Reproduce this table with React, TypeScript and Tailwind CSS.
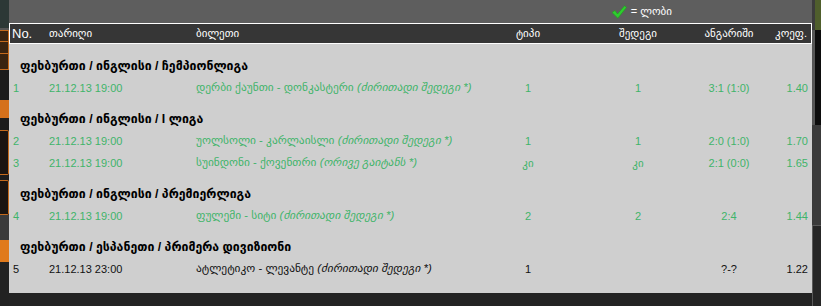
const GREEN = 'text-[#3fb46a]';

type Row = {
    no: number;
    date: string;
    teams: string;
    note: string;
    type: string;
    result: string;
    score: string;
    coef: string;
    win: boolean;
};

const groups: { title: string; rows: Row[] }[] = [
    {
        title: 'ფეხბურთი / ინგლისი / ჩემპიონლიგა',
        rows: [
            { no: 1, date: '21.12.13 19:00', teams: 'დერბი ქაუნთი - დონკასტერი', note: '(ძირითადი შედეგი *)', type: '1', result: '1', score: '3:1 (1:0)', coef: '1.40', win: true },
        ],
    },
    {
        title: 'ფეხბურთი / ინგლისი / I ლიგა',
        rows: [
            { no: 2, date: '21.12.13 19:00', teams: 'უოლსოლი - კარლაისლი', note: '(ძირითადი შედეგი *)', type: '1', result: '1', score: '2:0 (1:0)', coef: '1.70', win: true },
            { no: 3, date: '21.12.13 19:00', teams: 'სუინდონი - ქოვენთრი', note: '(ორივე გაიტანს *)', type: 'კი', result: 'კი', score: '2:1 (0:0)', coef: '1.65', win: true },
        ],
    },
    {
        title: 'ფეხბურთი / ინგლისი / პრემიერლიგა',
        rows: [
            { no: 4, date: '21.12.13 19:00', teams: 'ფულემი - სიტი', note: '(ძირითადი შედეგი *)', type: '2', result: '2', score: '2:4', coef: '1.44', win: true },
        ],
    },
    {
        title: 'ფეხბურთი / ესპანეთი / პრიმერა დივიზიონი',
        rows: [
            { no: 5, date: '21.12.13 23:00', teams: 'ატლეტიკო - ლევანტე', note: '(ძირითადი შედეგი *)', type: '1', result: '', score: '?-?', coef: '1.22', win: false },
        ],
    },
];

function Check() {
    return (
        <svg width="16" height="14" viewBox="0 0 16 14">
            <path d="M1 7.5 L4 5.5 L6.5 9 L13.5 0.8 L15.5 2.5 L6.8 13.2 Z" fill="#2ecc2e" stroke="#1ea01e" strokeWidth="0.6" />
        </svg>
    );
}

function BetRow({ r }: { r: Row }) {
    const color = r.win ? GREEN : 'text-[#111]';
    return (
        <div className={`flex h-[22px] items-center text-[11px] ${color}`}>
            <div className="w-[37px] pl-[4px]">{r.no}</div>
            <div className="w-[147px] pl-[3px]">{r.date}</div>
            <div className="w-[287px] pl-[3px] text-[11.4px] whitespace-nowrap">
                {r.teams} <span className="italic">{r.note}</span>
            </div>
            <div className="w-[96px] text-center">{r.type}</div>
            <div className="w-[124px] text-center">{r.result}</div>
            <div className="w-[58px] text-center">{r.score}</div>
            <div className="w-[54px] pr-[4px] text-right">{r.coef}</div>
        </div>
    );
}

function LeftStrip() {
    return (
        <div className="flex w-[9px] flex-col bg-[#1c1c1c]">
            <div className="h-[28px] bg-[#2c3836]" />
            <div className="h-[2px] bg-[#555]" />
            <div className="h-[12px] border border-l-0 border-[#c46a1c] bg-[#3a2410]" />
            <div className="h-[12px] border border-l-0 border-t-0 border-[#c46a1c] bg-[#3a2410]" />
            <div className="h-[16px] border border-l-0 border-t-0 border-[#c46a1c] bg-[#3a2410]" />
            <div className="h-[30px]" />
            <div className="h-[18px] bg-[#d5711c]" />
            <div className="h-[12px]" />
            <div className="h-[45px] rounded-r-[2px] border border-l-0 border-[#c46a1c] bg-[#1a1410]" />
            <div className="h-[5px]" />
            <div className="h-[35px] rounded-r-[2px] border border-l-0 border-[#c46a1c] bg-[#1a1410]" />
            <div className="h-[25px] bg-[#3a3a3a]" />
            <div className="h-[22px] bg-[#e07a1c]" />
            <div className="flex-1 bg-[#222]" />
        </div>
    );
}

function RightStrip() {
    return (
        <div className="flex w-[9px] flex-col">
            <div className="h-[30px] border-l-[3px] border-[#3c3c3c] bg-[#4f5e2c]" />
            <div className="h-[95px] border-l-[3px] border-[#555] bg-[#0c0c0c]" />
            <div className="h-[100px] bg-[#3a3a3a]" />
            <div className="flex-1 border-l border-t border-[#5a5a5a] bg-[#262626]" />
        </div>
    );
}

export default function App() {
    return (
        <div className="flex h-[306px] w-[821px] overflow-hidden bg-[#232323] font-['Liberation_Sans','DejaVu_Sans',sans-serif]">
            <LeftStrip />
            <div className="flex w-[803px] flex-col">
                <div className="flex h-[23px] items-center justify-end gap-[4px] bg-[#5e5e5e] pr-[140px] text-[11px] text-white">
                    <Check />
                    <span>= ლობი</span>
                </div>
                <div className="flex h-[21px] items-center border border-white bg-[#363636] text-[11px] text-white">
                    <div className="w-[36px] pl-[2px] text-[13px]">No.</div>
                    <div className="w-[147px] pl-[3px]">თარიღი</div>
                    <div className="w-[287px] pl-[3px]">ბილეთი</div>
                    <div className="w-[96px] text-center">ტიპი</div>
                    <div className="w-[124px] text-center">შედეგი</div>
                    <div className="w-[58px] text-center">ანგარიში</div>
                    <div className="w-[52px] pr-[3px] text-right">კოეფ.</div>
                </div>
                <div className="flex flex-col bg-[#cfcfcf] pt-[11px] pb-[13px]">
                    {groups.map((g, i) => (
                        <div key={g.title} className={i > 0 ? 'mt-[9px]' : ''}>
                            <div className="flex h-[22px] items-center pl-[11px] text-[12.3px] font-bold text-black">
                                {g.title}
                            </div>
                            {g.rows.map((r) => (
                                <BetRow key={r.no} r={r} />
                            ))}
                        </div>
                    ))}
                </div>
                <div className="flex-1 bg-[#232323]" />
            </div>
            <RightStrip />
        </div>
    );
}
